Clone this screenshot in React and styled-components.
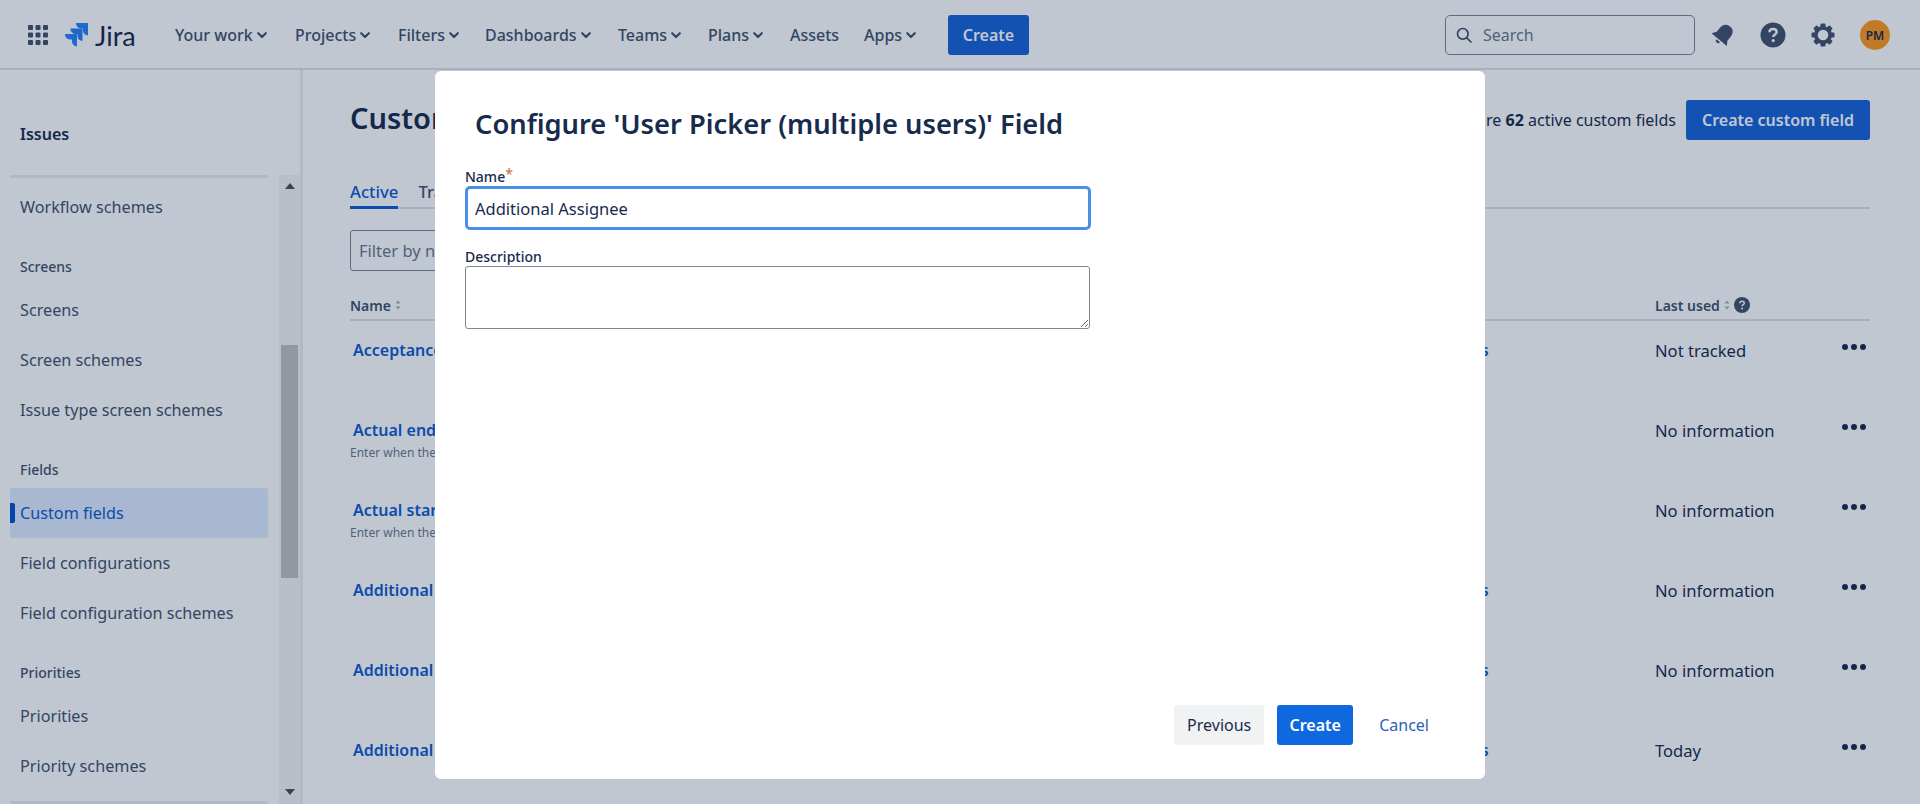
import React from 'react'
import styled, {createGlobalStyle} from 'styled-components'

const GlobalStyle = createGlobalStyle`
  html, body {
    margin: 0;
    padding: 0;
    height: 100%;
    overflow: hidden;
    background: #fff;
    font-family: "Noto Sans", "Open Sans", sans-serif;
    color: #172b4d;
  }
  * { box-sizing: border-box; }
`

const navItems = [
  {label: 'Your work', arrow: true, width: 120},
  {label: 'Projects', arrow: true, width: 103},
  {label: 'Filters', arrow: true, width: 87},
  {label: 'Dashboards', arrow: true, width: 133},
  {label: 'Teams', arrow: true, width: 90},
  {label: 'Plans', arrow: true, width: 82},
  {label: 'Assets', width: 74},
  {label: 'Apps', arrow: true, width: 84},
]

const sideGroups = [
  {items: ['Workflow schemes']},
  {title: 'Screens', items: ['Screens', 'Screen schemes', 'Issue type screen schemes']},
  {title: 'Fields', items: ['Custom fields', 'Field configurations', 'Field configuration schemes']},
  {title: 'Priorities', items: ['Priorities', 'Priority schemes']},
]

const rows = [
  {name: 'Acceptance criteria', screens: '2 screens', used: 'Not tracked'},
  {name: 'Actual end', desc: 'Enter when the work actually ended', used: 'No information'},
  {name: 'Actual start', desc: 'Enter when the work actually started', used: 'No information'},
  {name: 'Additional approvers', screens: '3 screens', used: 'No information'},
  {name: 'Additional details', screens: '4 screens', used: 'No information'},
  {name: 'Additional reviewers', screens: '3 screens', used: 'Today'},
]

function Chevron() {
  return (
    <svg width="12" height="12" viewBox="0 0 12 12">
      <path d="M2.2 4.2 L6 8 L9.8 4.2" fill="none" stroke="currentColor" strokeWidth="2.2" strokeLinecap="round" strokeLinejoin="round"/>
    </svg>
  )
}

function GridIcon() {
  const cells = []
  for(var y = 0; y < 3; y++) {
    for(var x = 0; x < 3; x++) {
      cells.push(<rect key={x + '-' + y} x={x * 7.5} y={y * 7.5} width="5" height="5" rx="1" fill="#42526e"/>)
    }
  }
  return <svg width="20" height="20" viewBox="0 0 20 20">{cells}</svg>
}

const jiraPiece = 'M11 0 H23 V12.5 A5 5 0 0 1 18 7.5 V5.5 H16 A5 5 0 0 1 11 0 Z'

function JiraMark() {
  return (
    <svg width="24" height="24" viewBox="0 0 24 24">
      <path d={jiraPiece} fill="#2684ff"/>
      <path d={jiraPiece} fill="#2c7cf0" transform="translate(-5.5 5.5)"/>
      <path d={jiraPiece} fill="#2684ff" transform="translate(-11 11)"/>
    </svg>
  )
}

function SearchIcon() {
  return (
    <svg width="16" height="16" viewBox="0 0 16 16">
      <circle cx="6.8" cy="6.8" r="5.3" fill="none" stroke="#42526e" strokeWidth="1.7"/>
      <path d="M10.8 10.8 L15 15" stroke="#42526e" strokeWidth="1.7" strokeLinecap="round"/>
    </svg>
  )
}

function BellIcon() {
  return (
    <svg width="26" height="26" viewBox="0 0 26 26">
      <g transform="rotate(40 13 13)" fill="#42526e">
        <path d="M13 2 C8 2 6 5.5 6 10 V14.5 L3 19 H23 L20 14.5 V10 C20 5.5 18 2 13 2 Z"/>
        <path d="M10.6 20.5 H15.4 A2.4 2.4 0 0 1 10.6 20.5 Z"/>
      </g>
    </svg>
  )
}

function HelpIcon() {
  return (
    <svg width="26" height="26" viewBox="0 0 26 26">
      <circle cx="13" cy="13" r="12.5" fill="#42526e"/>
      <path d="M9.4 10.2 C9.5 8 11 7 13 7 C15.2 7 16.7 8.3 16.7 10.1 C16.7 12.6 13.2 12.6 13.2 15" fill="none" stroke="#fff" strokeWidth="2.4"/>
      <circle cx="13.2" cy="18.6" r="1.6" fill="#fff"/>
    </svg>
  )
}

function GearIcon() {
  const teeth = [0, 45, 90, 135, 180, 225, 270, 315]
  return (
    <svg width="26" height="26" viewBox="0 0 26 26">
      {teeth.map((deg)=>(
        <rect key={deg} x="10.5" y="1.5" width="5" height="5" rx="1" fill="#42526e" transform={`rotate(${deg} 13 13)`}/>
      ))}
      <circle cx="13" cy="13" r="7.2" fill="none" stroke="#42526e" strokeWidth="3.8"/>
    </svg>
  )
}

function SortIcon() {
  return (
    <svg width="8" height="12" viewBox="0 0 8 12">
      <path d="M4 1.5 L6.5 4.5 H1.5 Z M4 10.5 L1.5 7.5 H6.5 Z" fill="#a5adba"/>
    </svg>
  )
}

function SmallHelp() {
  return (
    <svg width="16" height="16" viewBox="0 0 16 16">
      <circle cx="8" cy="8" r="8" fill="#42526e"/>
      <path d="M5.8 6.2 C5.9 4.9 6.8 4.2 8 4.2 C9.4 4.2 10.3 5 10.3 6.1 C10.3 7.7 8.1 7.7 8.1 9.2" fill="none" stroke="#fff" strokeWidth="1.5"/>
      <circle cx="8.1" cy="11.5" r="1" fill="#fff"/>
    </svg>
  )
}

function Topbar() {
  return (
    <Header>
      <GridSlot><GridIcon/></GridSlot>
      <Logo>
        <JiraMark/>
        <span>Jira</span>
      </Logo>
      <Nav>
        {navItems.map((item)=>(
          <NavItem key={item.label} $width={item.width}>
            {item.label}
            {item.arrow && <Chevron/>}
          </NavItem>
        ))}
      </Nav>
      <PrimaryButton $width={81}>Create</PrimaryButton>
      <HeaderRight>
        <SearchBox>
          <SearchIcon/>
          <span>Search</span>
        </SearchBox>
        <IconSlot $ml={15}><BellIcon/></IconSlot>
        <IconSlot $ml={24}><HelpIcon/></IconSlot>
        <IconSlot $ml={24}><GearIcon/></IconSlot>
        <Avatar>PM</Avatar>
      </HeaderRight>
    </Header>
  )
}

function Sidebar() {
  return (
    <Side>
      <SideTitle>Issues</SideTitle>
      <SideBody>
        <SideList>
          {sideGroups.map((group, i)=>(
            <SideGroup key={i}>
              {group.title && <GroupTitle>{group.title}</GroupTitle>}
              {group.items.map((item)=>(
                <SideItem key={item} $active={item === 'Custom fields'}>{item}</SideItem>
              ))}
            </SideGroup>
          ))}
        </SideList>
        <Track>
          <TrackArrow $up/>
          <Thumb/>
          <TrackArrow/>
        </Track>
      </SideBody>
    </Side>
  )
}

function Content() {
  return (
    <Main>
      <TitleRow>
        <PageTitle>Custom fields</PageTitle>
        <TitleRight>
          <span>There are <b>62</b> active custom fields</span>
          <PrimaryButton $width={184}>Create custom field</PrimaryButton>
        </TitleRight>
      </TitleRow>
      <Tabs>
        <Tab $active>Active</Tab>
        <Tab>Trash</Tab>
      </Tabs>
      <FilterBox>Filter by name</FilterBox>
      <TableHead>
        <HeadCell>Name <SortIcon/></HeadCell>
        <HeadCell>Screens</HeadCell>
        <HeadCell>Last used <SortIcon/> <SmallHelp/></HeadCell>
        <span/>
      </TableHead>
      {rows.map((row)=>(
        <Row key={row.name}>
          <div>
            <RowLink>{row.name}</RowLink>
            {row.desc && <RowDesc>{row.desc}</RowDesc>}
          </div>
          <RowLink>{row.screens}</RowLink>
          <RowUsed>{row.used}</RowUsed>
          <Dots><i/><i/><i/></Dots>
        </Row>
      ))}
    </Main>
  )
}

function ConfigureDialog() {
  return (
    <Dialog>
      <DialogTitle>Configure 'User Picker (multiple users)' Field</DialogTitle>
      <FieldLabel $mt={0}>Name<Req>*</Req></FieldLabel>
      <NameInput defaultValue="Additional Assignee"/>
      <FieldLabel $mt={18}>Description</FieldLabel>
      <DescInput/>
      <DialogFooter>
        <GhostButton>Previous</GhostButton>
        <SubmitButton>Create</SubmitButton>
        <CancelLink>Cancel</CancelLink>
      </DialogFooter>
    </Dialog>
  )
}

export default function App() {
  return (
    <Page>
      <GlobalStyle/>
      <Topbar/>
      <Columns>
        <Sidebar/>
        <Content/>
      </Columns>
      <Blanket/>
      <ConfigureDialog/>
    </Page>
  )
}

const Page = styled.div`
  position: relative;
  height: 804px;
  overflow: hidden;
`

const Header = styled.header`
  height: 70px;
  display: flex;
  align-items: center;
  padding: 2px 30px 0 28px;
  border-bottom: 2px solid #dfe1e6;
`

const GridSlot = styled.div`
  display: flex;
  width: 37px;
`

const Logo = styled.div`
  display: flex;
  align-items: center;
  width: 110px;
  gap: 6px;
  span {
    font-family: "Lato", sans-serif;
    font-size: 27px;
    color: #172b4d;
  }
`

const Nav = styled.nav`
  display: flex;
  align-items: center;
`

const NavItem = styled.div`
  display: flex;
  align-items: center;
  gap: 3px;
  width: ${props => props.$width}px;
  flex: none;
  font-size: 16px;
  font-weight: 500;
  color: #42526e;
  white-space: nowrap;
`

const PrimaryButton = styled.button`
  width: ${props => props.$width}px;
  height: 40px;
  flex: none;
  border: none;
  border-radius: 3px;
  background: #1763d8;
  color: #fff;
  font-family: inherit;
  font-size: 16px;
  font-weight: 600;
`

const HeaderRight = styled.div`
  margin-left: auto;
  display: flex;
  align-items: center;
`

const SearchBox = styled.div`
  width: 250px;
  height: 40px;
  display: flex;
  align-items: center;
  gap: 11px;
  padding: 0 10px;
  border: 1px solid #7a869a;
  border-radius: 5px;
  font-size: 16px;
  color: #6b778c;
`

const IconSlot = styled.div`
  display: flex;
  margin-left: ${props => props.$ml}px;
`

const Avatar = styled.div`
  width: 30px;
  height: 30px;
  margin-left: 24px;
  border-radius: 50%;
  background: #ff991f;
  color: #172b4d;
  font-size: 12px;
  font-weight: 600;
  display: flex;
  align-items: center;
  justify-content: center;
`

const Columns = styled.div`
  display: flex;
  height: 734px;
`

const Side = styled.aside`
  width: 303px;
  flex: none;
  display: flex;
  flex-direction: column;
  border-right: 3px solid #ebecf0;
`

const SideTitle = styled.div`
  height: 105px;
  padding: 53px 0 0 20px;
  font-size: 16px;
  font-weight: 600;
  color: #172b4d;
`

const SideBody = styled.div`
  flex: 1;
  min-height: 0;
  display: flex;
`

const SideList = styled.div`
  width: 279px;
  flex: none;
  padding: 0 11px 0 10px;
  overflow: hidden;
  position: relative;
  &::before {
    content: '';
    display: block;
    height: 3px;
    margin-bottom: 4px;
    background: #ebecf0;
  }
  &::after {
    content: '';
    position: absolute;
    left: 10px;
    right: 11px;
    bottom: 0;
    height: 3px;
    background: #ebecf0;
  }
`

const SideGroup = styled.div`
  margin-bottom: 15px;
`

const GroupTitle = styled.div`
  height: 38px;
  display: flex;
  align-items: center;
  padding-left: 10px;
  font-size: 14px;
  font-weight: 500;
  color: #42526e;
`

const SideItem = styled.div`
  position: relative;
  height: 50px;
  display: flex;
  align-items: center;
  padding-left: 10px;
  border-radius: 3px;
  font-size: 16.2px;
  color: ${props => props.$active ? '#0c5bd0' : '#42526e'};
  background: ${props => props.$active ? '#deebff' : 'transparent'};
  &::before {
    content: '';
    display: ${props => props.$active ? 'block' : 'none'};
    position: absolute;
    left: 0;
    top: 15px;
    width: 5px;
    height: 20px;
    border-radius: 0 2px 2px 0;
    background: #0052cc;
  }
`

const Track = styled.div`
  width: 21px;
  flex: none;
  display: flex;
  flex-direction: column;
  align-items: center;
  padding: 8px 0 9px;
  background: #f4f4f4;
`

const TrackArrow = styled.div`
  width: 0;
  height: 0;
  border-left: 5px solid transparent;
  border-right: 5px solid transparent;
  border-bottom: ${props => props.$up ? '6px solid #505050' : 'none'};
  border-top: ${props => props.$up ? 'none' : '6px solid #505050'};
`

const Thumb = styled.div`
  width: 17px;
  height: 233px;
  margin: 156px 0 auto;
  background: #c1c1c1;
`

const Main = styled.main`
  flex: 1;
  min-width: 0;
  padding: 30px 50px 0 47px;
`

const TitleRow = styled.div`
  display: flex;
  align-items: center;
  justify-content: space-between;
  height: 40px;
`

const PageTitle = styled.h1`
  margin: 0;
  padding-bottom: 5px;
  font-size: 29px;
  font-weight: 600;
  color: #172b4d;
`

const TitleRight = styled.div`
  display: flex;
  align-items: center;
  gap: 10px;
  font-size: 16px;
  color: #172b4d;
`

const Tabs = styled.div`
  display: flex;
  gap: 20px;
  margin-top: 33px;
  height: 36px;
  border-bottom: 2px solid #dfe1e6;
`

const Tab = styled.div`
  height: 36px;
  padding-top: 8px;
  font-size: 16.7px;
  line-height: 22px;
  font-weight: 500;
  color: ${props => props.$active ? '#0c5bd0' : '#42526e'};
  border-bottom: ${props => props.$active ? '3px solid #0c5bd0' : 'none'};
`

const FilterBox = styled.div`
  width: 240px;
  height: 41px;
  margin-top: 21px;
  padding: 8px 8px;
  border: 1px solid #7a869a;
  border-radius: 3px;
  font-size: 16.5px;
  color: #6b778c;
`

const tableColumns = '1063px 242px 175px 40px'

const TableHead = styled.div`
  display: grid;
  grid-template-columns: ${tableColumns};
  align-items: center;
  height: 50px;
  padding-top: 20px;
  border-bottom: 2px solid #dfe1e6;
`

const HeadCell = styled.div`
  display: flex;
  align-items: center;
  gap: 3px;
  font-size: 14px;
  font-weight: 600;
  color: #42526e;
`

const Row = styled.div`
  display: grid;
  grid-template-columns: ${tableColumns};
  height: 80px;
  padding-top: 18px;
`

const RowLink = styled.div`
  padding-left: 3px;
  font-size: 16px;
  font-weight: 600;
  color: #0c5bd0;
`

const RowDesc = styled.div`
  margin-top: 3px;
  font-size: 12px;
  color: #6b778c;
`

const RowUsed = styled.div`
  font-size: 16.6px;
  color: #172b4d;
`

const Dots = styled.div`
  display: flex;
  gap: 3px;
  padding: 5px 0 0 12px;
  height: 12px;
  i {
    width: 6px;
    height: 6px;
    border-radius: 50%;
    background: #172b4d;
  }
`

const Blanket = styled.div`
  position: absolute;
  inset: 0;
  background: rgba(9,30,66,0.25);
`

const Dialog = styled.div`
  position: absolute;
  left: 435px;
  top: 71px;
  width: 1050px;
  height: 708px;
  display: flex;
  flex-direction: column;
  padding: 32px 56px 34px 30px;
  background: #fff;
  border-radius: 6px;
`

const DialogTitle = styled.h2`
  margin: 0 0 23px 10px;
  font-size: 27.3px;
  font-weight: 600;
  line-height: 42px;
  color: #172b4d;
`

const FieldLabel = styled.label`
  display: block;
  margin-top: ${props => props.$mt}px;
  font-size: 14px;
  line-height: 18px;
  font-weight: 500;
  color: #172b4d;
`

const Req = styled.span`
  color: #c8794a;
  position: relative;
  top: -3px;
`

const NameInput = styled.input`
  display: block;
  width: 626px;
  height: 44px;
  padding: 0 7px;
  border: 3px solid #4a8fe8;
  border-radius: 5px;
  outline: none;
  font-family: inherit;
  font-size: 16.5px;
  color: #172b4d;
`

const DescInput = styled.textarea`
  display: block;
  width: 625px;
  height: 63px;
  border: 1px solid #82868f;
  border-radius: 3px;
  font-family: inherit;
`

const DialogFooter = styled.div`
  margin-top: auto;
  display: flex;
  justify-content: flex-end;
  align-items: center;
`

const GhostButton = styled.button`
  width: 90px;
  height: 40px;
  border: none;
  border-radius: 3px;
  background: #f1f2f4;
  color: #172b4d;
  font-family: inherit;
  font-size: 16px;
`

const SubmitButton = styled.button`
  width: 76px;
  height: 40px;
  margin-left: 13px;
  border: none;
  border-radius: 3px;
  background: #1068e0;
  color: #fff;
  font-family: inherit;
  font-size: 16px;
  font-weight: 600;
`

const CancelLink = styled.a`
  margin: 0 0 0 26px;
  font-size: 16px;
  color: #2a63b8;
`
